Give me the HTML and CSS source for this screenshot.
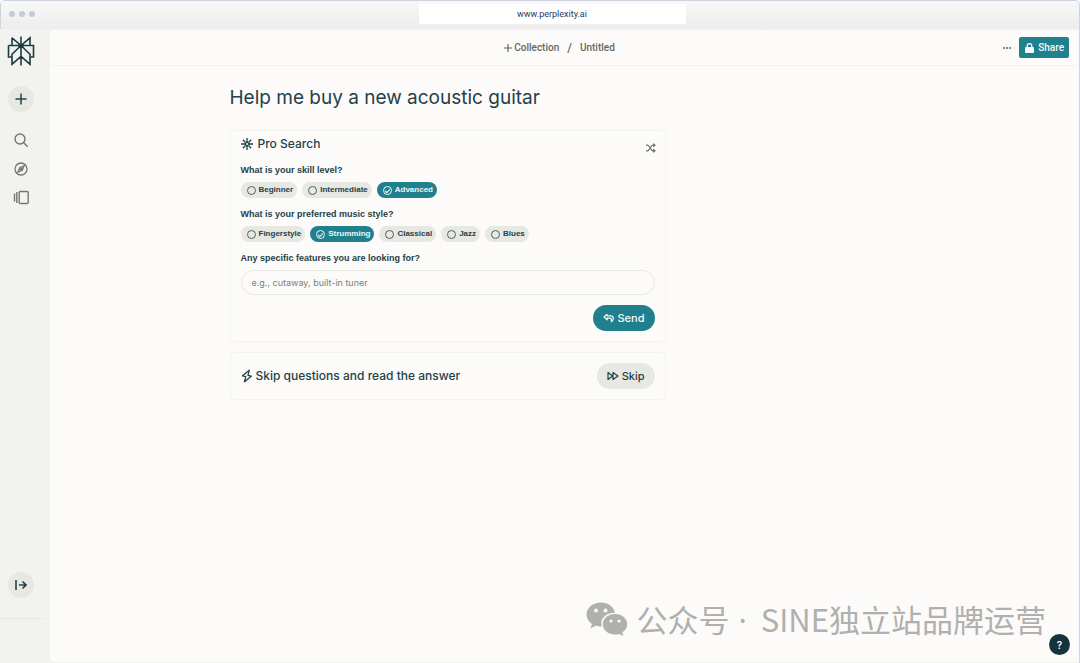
FILE: index.html
```html
<!DOCTYPE html>
<html lang="en">
<head>
<meta charset="utf-8">
<title>Help me buy a new acoustic guitar</title>
<link rel="stylesheet" href="styles.css">
</head>
<body>
<div class="window">
  <header class="titlebar">
    <div class="lights"><span></span><span></span><span></span></div>
    <div class="address">www.perplexity.ai</div>
  </header>
  <div class="app">
    <nav class="sidebar" aria-label="Main">
      <a class="logo" href="#" aria-label="Home">
        <svg width="28" height="30" viewBox="0 0 28 30" fill="none" stroke="currentColor" stroke-width="1.6">
          <path d="M14 .500v29M5 1.800V9.500M5 1.800L14 9.500 23 1.800V9.500M1.500 9.500h25v11.500H23M1.500 9.500v11.500H5M14 9.500L5 18.300V28.300L14 20.300 23 28.300V18.300L14 9.500"/>
          <path d="M11.500 8h5v3l-2.500 1.500L11.500 11z" fill="currentColor" stroke="none"/>
        </svg>
      </a>
      <button class="round new" aria-label="New thread">
        <svg width="12" height="12" viewBox="0 0 12 12" fill="none" stroke="currentColor" stroke-width="1.5"><path d="M6 .500v11M.500 6h11"/></svg>
      </button>
      <div class="links">
        <a href="#" aria-label="Search"><svg width="16" height="16" viewBox="0 0 16 16" fill="none" stroke="currentColor" stroke-width="1.400"><circle cx="7" cy="7" r="5"/><path d="M10.700 10.700l4 4"/></svg></a>
        <a href="#" aria-label="Discover"><svg width="16" height="16" viewBox="0 0 16 16" fill="none" stroke="currentColor" stroke-width="1.300"><circle cx="8" cy="8" r="6"/><path d="M11 5L9.300 9.300 5 11l1.700-4.300z"/><circle cx="8" cy="8" r=".8"/></svg></a>
        <a href="#" aria-label="Library"><svg width="16" height="16" viewBox="0 0 16 16" fill="none" stroke="currentColor" stroke-width="1.400"><rect x="6.200" y="1.500" width="9" height="12" rx="1"/><path d="M3.800 2v11M1.500 3.500v8"/></svg></a>
      </div>
      <button class="round expand" aria-label="Expand sidebar">
        <svg width="12" height="12" viewBox="0 0 12 12" fill="none" stroke="currentColor" stroke-width="1.600"><path d="M1 1v10M4 6h7M7.500 2.500L11 6 7.500 9.500"/></svg>
      </button>
      <div class="account"></div>
    </nav>
    <main class="panel">
      <div class="topbar">
        <div class="crumbs">
          <a href="#"><svg width="8" height="8" viewBox="0 0 8 8" fill="none" stroke="currentColor" stroke-width="1.200"><path d="M4 0v8M0 4h8"/></svg>Collection</a>
          <span class="slash">/</span>
          <span>Untitled</span>
        </div>
        <div class="actions">
          <button class="more" aria-label="More"><svg width="8" height="2" viewBox="0 0 8 2" fill="currentColor"><circle cx="1" cy="1" r="1"/><circle cx="4" cy="1" r="1"/><circle cx="7" cy="1" r="1"/></svg></button>
          <button class="share"><svg width="9" height="10" viewBox="0 0 9 10"><rect y="4" width="9" height="6" rx="1" fill="currentColor"/><path d="M2.200 4.500V3a2.300 2.300 0 0 1 4.600 0v1.500" fill="none" stroke="currentColor" stroke-width="1.300"/></svg>Share</button>
        </div>
      </div>
      <div class="thread">
        <div class="column">
          <h1>Help me buy a new acoustic guitar</h1>
          <form class="card questions">
            <div class="cardhead">
              <h2><svg width="12" height="12" viewBox="0 0 12 12" fill="none" stroke="currentColor" stroke-width="1.300"><path d="M6 0v4M6 8v4M0 6h4M8 6h4M1.800 1.800l2.700 2.700M7.500 7.500l2.700 2.700M10.200 1.800L7.500 4.500M4.500 7.500l-2.700 2.700"/><path d="M6 3.800L8.200 6 6 8.200 3.800 6z"/></svg>Pro Search</h2>
              <button type="button" class="shuffle" aria-label="Shuffle"><svg width="10" height="10" viewBox="0 0 10 10" fill="none" stroke="currentColor" stroke-width="1.200"><path d="M0 2.200h1.500c2.500 0 3 5.600 5.500 5.600h1.500M0 7.800h1.500c2.500 0 3-5.600 5.500-5.600h1.500"/><path d="M7.500.500L9.500 2.200l-2 1.700zM7.500 6.100l2 1.700-2 1.700z" fill="currentColor" stroke-width=".6"/></svg></button>
            </div>
            <fieldset>
              <legend>What is your skill level?</legend>
              <div class="options">
                <label><input type="radio" name="skill">Beginner</label>
                <label><input type="radio" name="skill">Intermediate</label>
                <label><input type="radio" name="skill" checked>Advanced</label>
              </div>
            </fieldset>
            <fieldset>
              <legend>What is your preferred music style?</legend>
              <div class="options">
                <label><input type="checkbox">Fingerstyle</label>
                <label><input type="checkbox" checked>Strumming</label>
                <label><input type="checkbox">Classical</label>
                <label><input type="checkbox">Jazz</label>
                <label><input type="checkbox">Blues</label>
              </div>
            </fieldset>
            <label class="question" for="features">Any specific features you are looking for?</label>
            <input class="field" id="features" type="text" placeholder="e.g., cutaway, built-in tuner">
            <button type="button" class="pill send"><svg width="12" height="10" viewBox="0 0 12 10" fill="none" stroke="currentColor" stroke-width="1.200" stroke-linejoin="round"><path d="M4.200 1.200L1 4l3.200 2.800V5.200h2.600c1.800 0 2 1.300 1.400 3.800M4.200 1.200v1.600h3.600c2.900 0 3.700 3.800.4 6.200"/></svg>Send</button>
          </form>
          <section class="card skip">
            <h2><svg width="12" height="14" viewBox="0 0 12 14" fill="none" stroke="currentColor" stroke-width="1.300" stroke-linejoin="round"><path d="M8.300 1.200L1.500 6.800l3.300.8-1.300 5.200L10.300 7.200 7 6.400z"/></svg>Skip questions and read the answer</h2>
            <button class="pill"><svg width="12" height="10" viewBox="0 0 12 10" fill="none" stroke="currentColor" stroke-width="1.200" stroke-linejoin="round"><path d="M1 1.500v7L5.500 5zM6 1.500v7L11 5z"/></svg>Skip</button>
          </section>
        </div>
      </div>
    </main>
  </div>
  <div class="watermark" lang="zh">
    <svg width="42" height="34" viewBox="0 0 42 34" fill="#b0b0ae">
      <path d="M15 .500C7 .500.500 5.800.500 12.500c0 4 2.200 7.300 5.500 9.500L4.500 26.500l5.300-2.700c2 .6 3.800.9 6 .8C13.500 16.500 20 10.500 29 10.700 27.500 4.500 22 .500 15 .500z"/>
      <path d="M29 12c-7 0-12.200 4.600-12.200 10.300S22 32.600 29 32.600c1.600 0 3-.2 4.300-.6l4.200 2-1.100-3.700c2.900-1.900 4.800-4.700 4.800-8C41.200 16.600 36 12 29 12z"/>
      <g fill="#fcfbf9"><circle cx="10" cy="8.500" r="1.900"/><circle cx="19.500" cy="8.500" r="1.900"/><circle cx="25" cy="19" r="1.600"/><circle cx="33" cy="19" r="1.600"/></g>
    </svg>
    <span>公众号<span class="dot">·</span>SINE独立站品牌运营</span>
  </div>
  <button class="help" aria-label="Help">?</button>
</div>
</body>
</html>
```

FILE: styles.css
```css
* { box-sizing: border-box; }

body {
  margin: 0;
  background: #fff;
  color: #234148;
  font-family: Inter, "Liberation Sans", sans-serif;
  font-size: 9px;
}

button {
  border: 0;
  padding: 0;
  background: none;
  color: inherit;
  font: inherit;
}

a { color: inherit; text-decoration: none; }
svg { display: block; flex: none; }
h1, h2 { margin: 0; font-weight: 500; }

.window {
  position: relative;
  display: flex;
  flex-direction: column;
  min-height: 100vh;
  border: 1px solid #cfd2df;
  border-width: 1px 1px 0 0;
  border-radius: 5px 5px 0 0;
  background: #f2f3ee;
  overflow: hidden;
}

.titlebar {
  display: grid;
  grid-template-columns: 1fr 267px 1fr;
  align-items: center;
  height: 28px;
  border-left: 1px solid #cfd2df;
  background: linear-gradient(#f8f8f9, #ededee);
}

.lights { display: flex; gap: 4px; padding-left: 8px; margin-top: -2px; }
.lights span { width: 6px; height: 6px; border-radius: 50%; background: #c0cdd7; }

.address {
  margin: -2px -12px 0 12px;
  border-radius: 2px;
  background: #fff;
  color: #2a3b66;
  font: 9px/20px Roboto, sans-serif;
  text-align: center;
}

.app { display: flex; flex: 1; }

.sidebar {
  display: flex;
  flex-direction: column;
  align-items: center;
  width: 50px;
  padding: 7px 8px 0 0;
}

.logo { color: #1b3c43; }

.round {
  display: grid;
  place-items: center;
  width: 26px;
  height: 26px;
  border-radius: 50%;
  background: #e8e8e3;
  color: #234148;
}

.new { margin-top: 20px; }

.links {
  display: grid;
  gap: 13px;
  margin-top: 20px;
  color: #74776f;
}

.expand { margin-top: auto; }

.account {
  align-self: stretch;
  height: 45px;
  margin: 20px -3px 0 0;
  border-top: 1px solid #e8e8e3;
}

.panel {
  flex: 1;
  margin: 1px 0;
  border-radius: 4px 0 0 4px;
  background: #fcfbf9;
}

.topbar {
  display: grid;
  grid-template-columns: 1fr auto 1fr;
  align-items: center;
  height: 36px;
  padding-right: 10px;
  border-bottom: 1px solid #f3f3ef;
  color: #65675f;
}

.crumbs {
  grid-column: 2;
  display: flex;
  align-items: center;
  gap: 8px;
  font: 500 10px/12px Roboto, sans-serif;
}

.crumbs a { display: flex; align-items: center; gap: 2px; }
.slash { font-size: 12px; }

.actions { display: flex; justify-content: flex-end; align-items: center; gap: 8px; }

.share {
  display: flex;
  align-items: center;
  gap: 4px;
  height: 21px;
  padding: 0 5px 0 6px;
  border-radius: 2px;
  background: #20808d;
  color: #f5faf9;
  font: 500 10px/12px Roboto, sans-serif;
}

.thread {
  display: grid;
  grid-template-columns: minmax(0, 436px) 1fr;
  max-width: 670px;
  margin: 0 auto;
  padding-top: 19px;
}

.column { display: grid; gap: 10px; }

h1 {
  margin-bottom: 9px;
  font-size: 19px;
  font-weight: 400;
  line-height: 26px;
}

.card {
  border: 1px solid #f3f3ef;
  border-radius: 4px;
  padding: 10px;
}

.questions { display: flex; flex-direction: column; padding-top: 5px; }
.cardhead { display: flex; justify-content: space-between; margin-bottom: 10px; }

h2 {
  display: flex;
  align-items: center;
  gap: 5px;
  font-size: 12px;
  line-height: 16px;
}

.cardhead h2 { height: 16px; }
.shuffle { height: 10px; margin-top: 7px; margin-right: -1px; color: #6d7068; }

fieldset { border: 0; margin: 0 0 9px; padding: 0; min-width: 0; }

legend, .question {
  padding: 0;
  font: bold 9px/14px "Liberation Sans", sans-serif;
}

.options { display: flex; flex-wrap: wrap; gap: 5px; margin-top: 5px; }

.options label {
  display: flex;
  align-items: center;
  gap: 2px;
  height: 16px;
  padding: 0 4px 0 6px;
  border-radius: 8px;
  background: #e8e8e3;
  font: bold 8px/12px "Liberation Sans", sans-serif;
}

.options input {
  appearance: none;
  display: grid;
  place-items: center;
  flex: none;
  width: 9px;
  height: 9px;
  margin: 0 1px 0 0;
  border: 1px solid #4a6266;
  border-radius: 50%;
}

.options label:has(:checked) { background: #20808d; color: #eef7f6; }
.options :checked { border-color: #eef7f6; }

.options :checked::after {
  content: "";
  width: 4px;
  height: 2px;
  border: solid #eef7f6;
  border-width: 0 0 1px 1px;
  transform: rotate(-45deg);
}

.field {
  height: 25px;
  margin-top: 5px;
  padding: 0 10px 1px;
  border: 1px solid #e8e8e3;
  border-radius: 13px;
  background: #fcfbf9;
  color: inherit;
  font: 9px/14px Inter, sans-serif;
}

.field::placeholder { color: #7d8079; opacity: 1; }

.pill {
  display: flex;
  align-items: center;
  gap: 3px;
  height: 26px;
  padding: 0 10px;
  border-radius: 13px;
  background: #e8e8e3;
  font-size: 11px;
  font-weight: 500;
}

.send {
  align-self: flex-end;
  margin-top: 10px;
  background: #20808d;
  color: #f5faf9;
}

.skip { display: flex; align-items: center; justify-content: space-between; }
.skip h2 { gap: 3px; }

.watermark {
  position: absolute;
  right: 33px;
  bottom: 21px;
  display: flex;
  align-items: center;
  gap: 8px;
  color: #b0b0ae;
  font: 400 31px/46px "Noto Sans CJK SC", sans-serif;
  white-space: nowrap;
}

.dot { padding: 0 14px 0 9px; font-family: "Noto Sans", sans-serif; line-height: 1; }

.help {
  position: absolute;
  right: 9px;
  bottom: 8px;
  width: 21px;
  height: 21px;
  border-radius: 50%;
  background: #13343b;
  color: #fff;
  font-size: 10px;
  font-weight: 600;
}
```
